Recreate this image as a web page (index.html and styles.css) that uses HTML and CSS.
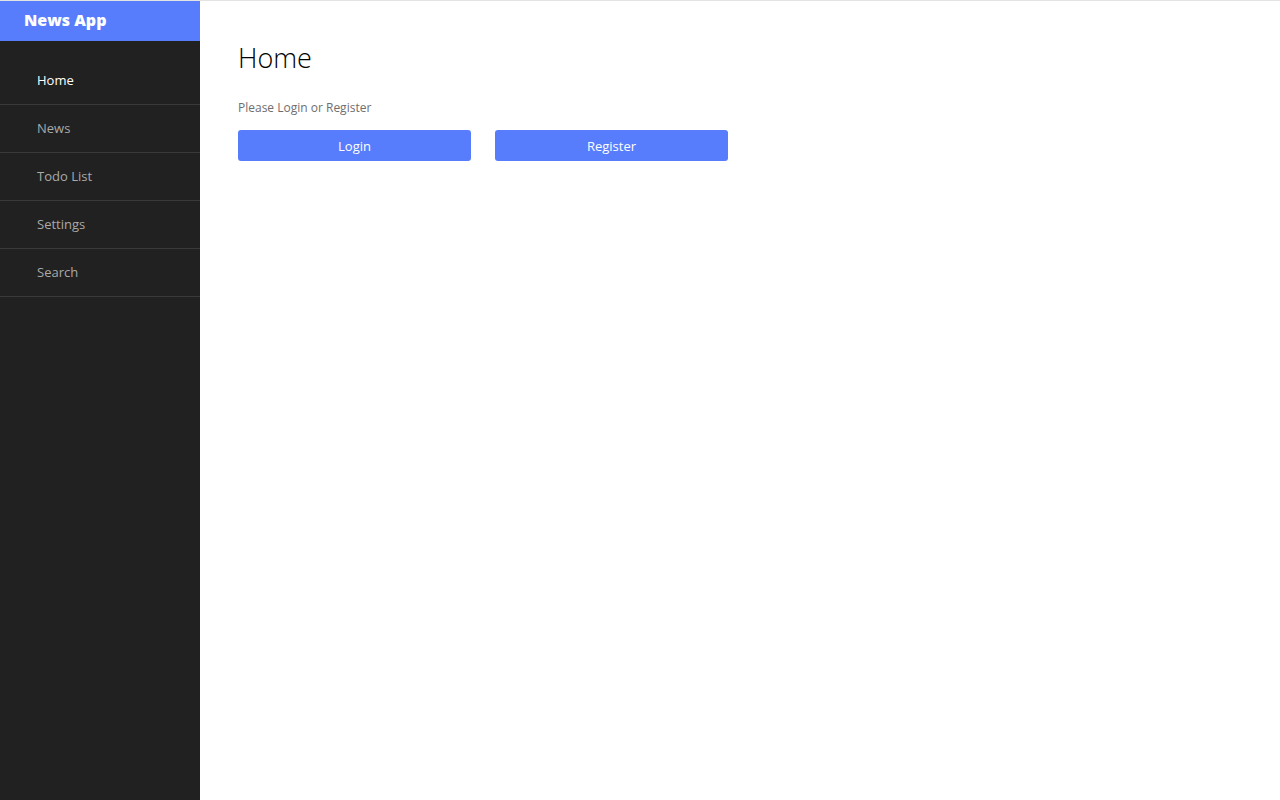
FILE: index.html
```html
<!DOCTYPE html>
<html>
<head>
<meta charset="utf-8">
<title>News App</title>
<link rel="stylesheet" href="styles.css">
</head>
<body>
<div class="app">
  <aside class="sidebar">
    <div class="brand">News App</div>
    <nav class="nav">
      <a class="nav-item active">Home</a>
      <a class="nav-item">News</a>
      <a class="nav-item">Todo List</a>
      <a class="nav-item">Settings</a>
      <a class="nav-item">Search</a>
    </nav>
  </aside>
  <main class="main">
    <h1 class="title">Home</h1>
    <p class="hint">Please Login or Register</p>
    <div class="actions">
      <button class="btn">Login</button>
      <button class="btn">Register</button>
    </div>
  </main>
</div>
</body>
</html>
```

FILE: styles.css
```css
* { box-sizing: border-box; }
html, body { margin: 0; padding: 0; height: 100%; }
body {
  font-family: "Open Sans", "Liberation Sans", sans-serif;
  border-top: 1px solid #e3e3e3;
  background: #fff;
}
.app { display: flex; height: 799px; }
.sidebar {
  width: 200px;
  flex: none;
  display: flex;
  flex-direction: column;
  background: #212121;
}
.brand {
  height: 40px;
  background: #587dfc;
  color: #fff;
  font-weight: 800;
  font-size: 16px;
  padding-left: 24px;
  padding-bottom: 2px;
  display: flex;
  align-items: center;
}
.nav { display: flex; flex-direction: column; padding-top: 16px; }
.nav-item {
  height: 48px;
  border-bottom: 1px solid #3a3a3a;
  padding-left: 37px;
  padding-bottom: 2px;
  display: flex;
  align-items: center;
  font-size: 13px;
  color: #a9a9a9;
}
.nav-item.active { color: #fff; }
.main { flex: 1; padding: 41px 38px; }
.title {
  margin: 0;
  font-size: 27px;
  font-weight: 300;
  color: #000;
  line-height: 32px;
}
.hint {
  margin: 26px 0 0;
  font-size: 12px;
  color: #6e6e6e;
  line-height: 16px;
}
.actions { display: flex; gap: 24px; margin-top: 14px; }
.btn {
  width: 233px;
  height: 31px;
  border: none;
  border-radius: 3px;
  background: #587dfc;
  color: #fff;
  font-family: inherit;
  font-size: 13px;
}
```
